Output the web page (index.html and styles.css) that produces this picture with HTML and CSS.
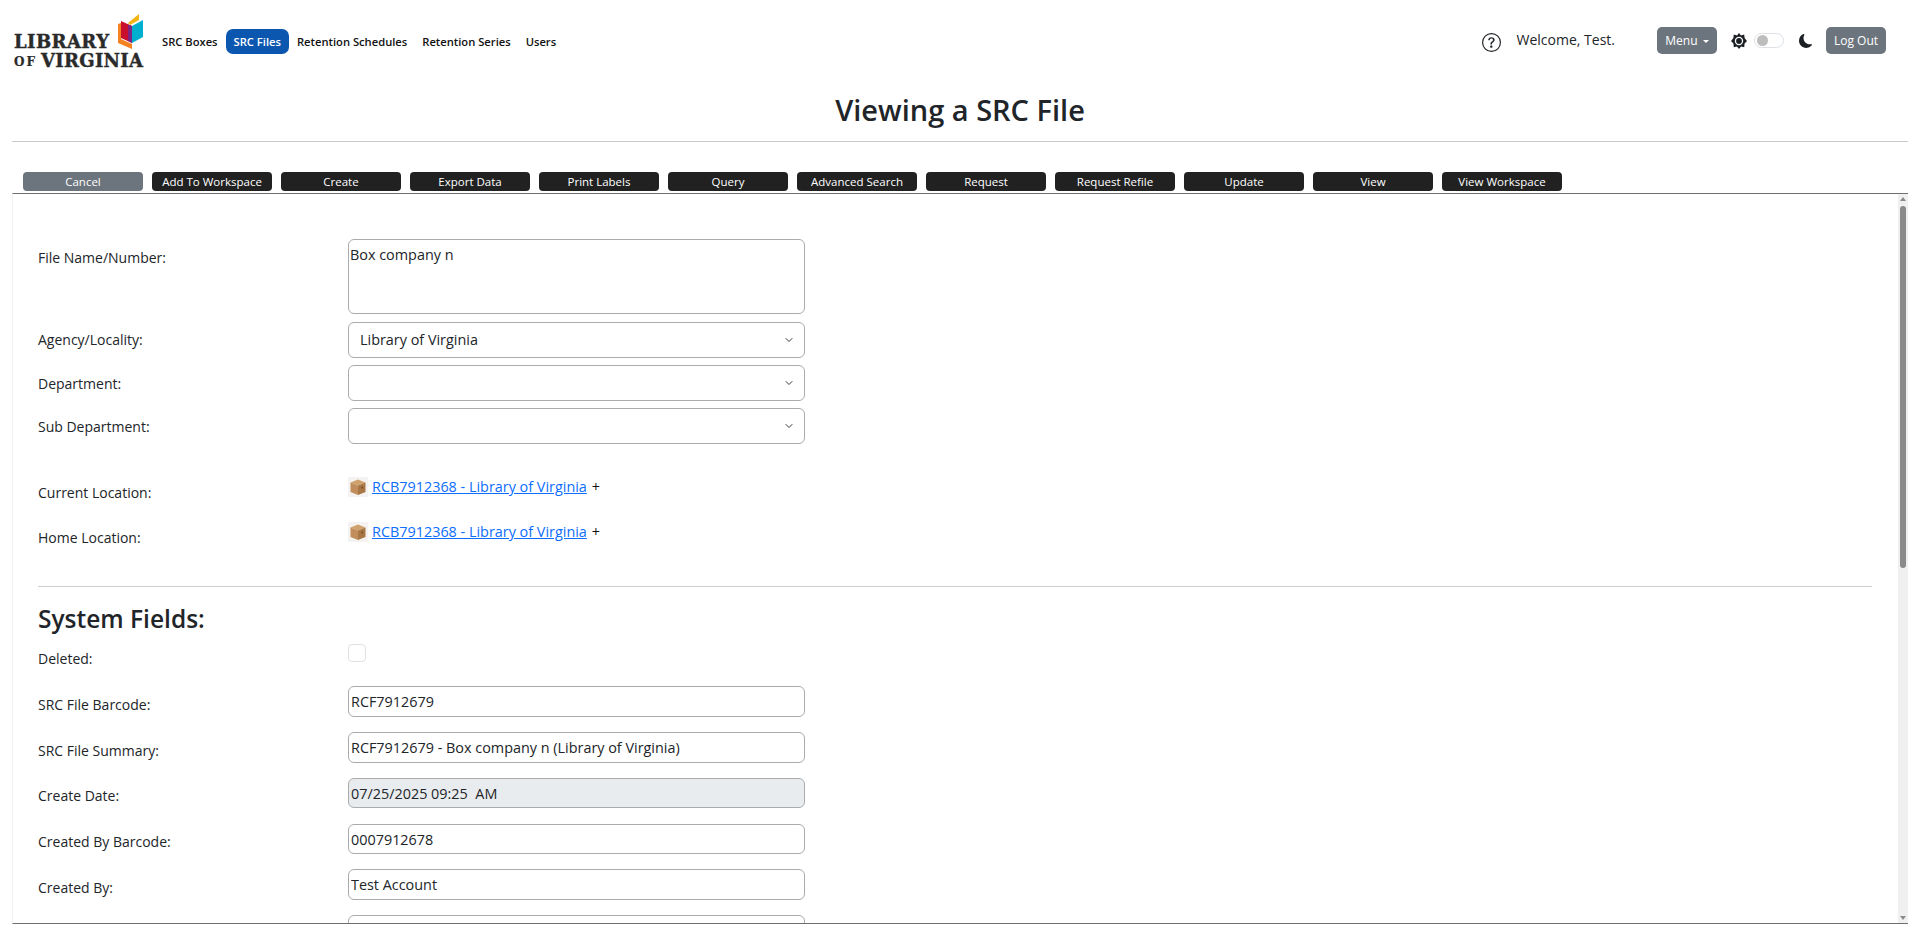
FILE: index.html
```html
<!DOCTYPE html>
<html lang="en">
<head>
<meta charset="utf-8">
<title>Viewing a SRC File</title>
<link rel="stylesheet" href="styles.css">
</head>
<body>
<header class="top">
  <a class="logo" href="#">
    <svg width="135" height="56" viewBox="12 14 135 56">
      <text class="logo-big" x="14" y="48" textLength="95">LIBRARY</text>
      <text class="logo-small" x="14" y="66" textLength="21">OF</text>
      <text class="logo-big" x="41" y="67" textLength="102">VIRGINIA</text>
      <polygon fill="#f58220" points="118,24 121,23 121,39 132,44 132,49 118,43"/>
      <polygon fill="#c8102e" points="121,21 132,26 132,43 121,38"/>
      <polygon fill="#7b2482" points="128,24.5 132,26 132,43 128,41"/>
      <polygon fill="#f2b411" points="128,23 139,14 139,20 130,25"/>
      <polygon fill="#00afd0" points="132,26 143,20 143,37 132,43"/>
    </svg>
  </a>
  <nav class="nav">
    <a href="#">SRC Boxes</a>
    <a href="#" class="active">SRC Files</a>
    <a href="#">Retention Schedules</a>
    <a href="#">Retention Series</a>
    <a href="#">Users</a>
  </nav>
  <div class="tools">
    <svg class="help" width="19" height="19" viewBox="0 0 16 16" fill="#212529">
      <path d="M8 15A7 7 0 1 1 8 1a7 7 0 0 1 0 14m0 1A8 8 0 1 0 8 0a8 8 0 0 0 0 16"/>
      <path d="M5.255 5.786a.237.237 0 0 0 .241.247h.825c.138 0 .248-.113.266-.25.09-.656.54-1.134 1.342-1.134.686 0 1.314.343 1.314 1.168 0 .635-.374.927-.965 1.371-.673.489-1.206 1.06-1.168 1.987l.003.217a.25.25 0 0 0 .25.246h.811a.25.25 0 0 0 .25-.25v-.105c0-.718.273-.927 1.01-1.486.609-.463 1.244-.977 1.244-2.056 0-1.511-1.276-2.241-2.673-2.241-1.267 0-2.655.59-2.75 2.286m1.557 5.763c0 .533.425.927 1.01.927.609 0 1.028-.394 1.028-.927 0-.552-.42-.94-1.029-.94-.584 0-1.009.388-1.009.94"/>
    </svg>
    <span class="welcome">Welcome, Test.</span>
    <button class="pill menu" type="button">Menu <i class="caret"></i></button>
    <svg class="sun" width="16" height="16" viewBox="0 0 16 16">
      <polygon fill="#1c1f23" points="8,0 10,2.6 13.2,1.6 13.6,5 16,8 13.6,10.4 13.2,14.2 10,13.4 8,16 6,13.4 2.8,14.2 2.4,10.4 0,8 2.4,5 2.8,1.6 6,2.6"/>
      <circle cx="8" cy="8" r="4.2" fill="#fff"/>
      <circle cx="8" cy="8" r="2.9" fill="#1c1f23"/>
    </svg>
    <span class="switch"><i></i></span>
    <svg class="moon" width="13" height="16" viewBox="0 0 15 16" fill="#1c1f23">
      <path d="M6 .278a.77.77 0 0 1 .08.858 7.2 7.2 0 0 0-.878 3.46c0 4.021 3.278 7.277 7.318 7.277q.792-.001 1.533-.16a.79.79 0 0 1 .81.316.73.73 0 0 1-.031.893A8.35 8.35 0 0 1 8.344 16C3.734 16 0 12.286 0 7.71 0 4.266 2.114 1.312 5.124.06A.75.75 0 0 1 6 .278"/>
    </svg>
    <button class="pill logout" type="button">Log Out</button>
  </div>
</header>

<div class="title-wrap"><h1>Viewing a SRC File</h1></div>

<div class="toolbar">
  <button class="tb cancel" type="button">Cancel</button>
  <button class="tb" type="button">Add To Workspace</button>
  <button class="tb" type="button">Create</button>
  <button class="tb" type="button">Export Data</button>
  <button class="tb" type="button">Print Labels</button>
  <button class="tb" type="button">Query</button>
  <button class="tb" type="button">Advanced Search</button>
  <button class="tb" type="button">Request</button>
  <button class="tb" type="button">Request Refile</button>
  <button class="tb" type="button">Update</button>
  <button class="tb" type="button">View</button>
  <button class="tb" type="button">View Workspace</button>
</div>

<main class="frame">
  <div class="scroller">
    <form class="form">
      <div class="row r-area">
        <label class="lab lab-7">File Name/Number:</label>
        <textarea class="field area">Box company n</textarea>
      </div>
      <div class="row r-sel first-sel">
        <label class="lab">Agency/Locality:</label>
        <span class="sel">
          <select class="field select"><option>Library of Virginia</option></select>
          <svg class="chev" width="8" height="8" viewBox="0 0 16 16"><path d="m2 5 6 6 6-6" fill="none" stroke="#343a40" stroke-width="2" stroke-linecap="round" stroke-linejoin="round"/></svg>
        </span>
      </div>
      <div class="row r-sel">
        <label class="lab lab-2">Department:</label>
        <span class="sel">
          <select class="field select"><option></option></select>
          <svg class="chev" width="8" height="8" viewBox="0 0 16 16"><path d="m2 5 6 6 6-6" fill="none" stroke="#343a40" stroke-width="2" stroke-linecap="round" stroke-linejoin="round"/></svg>
        </span>
      </div>
      <div class="row r-sel">
        <label class="lab lab-2">Sub Department:</label>
        <span class="sel">
          <select class="field select"><option></option></select>
          <svg class="chev" width="8" height="8" viewBox="0 0 16 16"><path d="m2 5 6 6 6-6" fill="none" stroke="#343a40" stroke-width="2" stroke-linecap="round" stroke-linejoin="round"/></svg>
        </span>
      </div>

      <div class="row r-loc first-loc">
        <label class="lab lab-4">Current Location:</label>
        <div class="loc">
          <svg class="box" width="20" height="20" viewBox="0 0 20 20">
            <rect width="20" height="20" fill="#f4f3f1"/>
            <polygon fill="#d0a26e" points="10,2.5 17.5,5.5 10,8.5 2.5,5.5"/>
            <polygon fill="#c08d5b" points="2.5,5.5 10,8.5 10,18 2.5,15"/>
            <polygon fill="#a97745" points="17.5,5.5 10,8.5 10,18 17.5,15"/>
            <rect x="13.5" y="9.5" width="1.5" height="2" fill="#6f4a28"/>
          </svg>
          <a href="#">RCB7912368 - Library of Virginia</a><span class="plus">+</span>
        </div>
      </div>
      <div class="row r-loc second-loc">
        <label class="lab lab-4">Home Location:</label>
        <div class="loc">
          <svg class="box" width="20" height="20" viewBox="0 0 20 20">
            <rect width="20" height="20" fill="#f4f3f1"/>
            <polygon fill="#d0a26e" points="10,2.5 17.5,5.5 10,8.5 2.5,5.5"/>
            <polygon fill="#c08d5b" points="2.5,5.5 10,8.5 10,18 2.5,15"/>
            <polygon fill="#a97745" points="17.5,5.5 10,8.5 10,18 17.5,15"/>
            <rect x="13.5" y="9.5" width="1.5" height="2" fill="#6f4a28"/>
          </svg>
          <a href="#">RCB7912368 - Library of Virginia</a><span class="plus">+</span>
        </div>
      </div>

      <hr class="rule">
      <h2>System Fields:</h2>

      <div class="row r-check">
        <label class="lab lab-3">Deleted:</label>
        <input class="check" type="checkbox" disabled>
      </div>
      <div class="row r-in h31">
        <label class="lab lab-7">SRC File Barcode:</label>
        <input class="field" type="text" value="RCF7912679">
      </div>
      <div class="row r-in h31">
        <label class="lab lab-7">SRC File Summary:</label>
        <input class="field" type="text" value="RCF7912679 - Box company n (Library of Virginia)">
      </div>
      <div class="row r-in h30">
        <label class="lab lab-6">Create Date:</label>
        <input class="field ro" type="text" value="07/25/2025 09:25  AM" readonly>
      </div>
      <div class="row r-in h30 mt16">
        <label class="lab lab-6">Created By Barcode:</label>
        <input class="field" type="text" value="0007912678">
      </div>
      <div class="row r-in h31">
        <label class="lab lab-7">Created By:</label>
        <input class="field" type="text" value="Test Account">
      </div>
      <div class="row r-in h31">
        <label class="lab lab-7"></label>
        <input class="field" type="text" value="">
      </div>
    </form>
  </div>
  <div class="bar" aria-hidden="true">
    <i class="arrow up"></i>
    <i class="thumb"></i>
    <i class="arrow down"></i>
  </div>
</main>
</body>
</html>
```
FILE: styles.css
```css
* { box-sizing: border-box; }
html, body { height: 100%; }
body {
  margin: 0;
  height: 929px;
  overflow: hidden;
  background: #fff;
  color: #212529;
  font-family: "Open Sans", "Noto Sans", sans-serif;
  font-size: 14px;
  line-height: 24px;
}
a { color: inherit; }

.top { display: flex; align-items: flex-start; height: 82px; padding: 14px 34px 0 12px; }
.logo { display: block; width: 135px; height: 56px; flex: none; }
.logo svg { display: block; }
.logo-big { font-family: "DejaVu Serif", serif; font-weight: 700; font-size: 18px; fill: #2a2a2a; stroke: #2a2a2a; stroke-width: .4; }
.logo-small { font-family: "DejaVu Serif", serif; font-weight: 700; font-size: 12px; fill: #2a2a2a; stroke: #2a2a2a; stroke-width: .2; }

.nav { display: flex; align-items: center; margin: 15px 0 0 8px; gap: 1px; font-size: 11.2px; font-weight: 600; color: #111; }
.nav a { text-decoration: none; height: 25px; line-height: 25px; padding: 0 7px; border-radius: 7px; white-space: nowrap; }
.nav a.active { background: #0b57b0; color: #fff; padding: 0 8px; }

.tools { margin-left: auto; display: flex; align-items: center; height: 27px; margin-top: 13px; }
.help { margin-right: 16px; margin-top: 4px; }
.welcome { font-size: 14px; margin-right: 42px; margin-top: -1px; }
.pill { border: 0; background: #6c757d; color: #fff; height: 27px; width: 60px; border-radius: 5px; font: 12px "Open Sans", sans-serif; padding: 0; }
.caret { display: inline-block; border: 3px solid transparent; border-top-color: #fff; border-bottom: 0; margin-left: 2px; vertical-align: 2px; }
.sun { margin-left: 14px; }
.switch { display: block; width: 30px; height: 15px; margin-left: 7px; border: 1px solid #dee2e6; border-radius: 8px; padding: 1px 0 0 2px; margin-top: -1px; }
.switch i { display: block; width: 11px; height: 11px; border-radius: 50%; background: #bdbdbd; }
.moon { margin-left: 15px; }
.logout { margin-left: 14px; }

.title-wrap { height: 60px; margin: 0 12px; border-bottom: 1px solid #c9c9c9; padding-top: 10px; }
h1 { margin: 0; text-align: center; font-size: 29px; line-height: 36px; font-weight: 600; }

.toolbar { display: flex; gap: 9px; padding: 30px 0 0 23px; height: 51px; margin-top: 0; }
.tb { width: 120px; height: 19px; border: 0; border-radius: 4px; background: #212121; color: #fff; font: 11.5px/19px "Open Sans", sans-serif; padding: 0; }
.tb.cancel { background: #6c757d; }

.frame { display: flex; height: 731px; margin: 0 12px; border-top: 1px solid #6f6f6f; border-bottom: 1px solid #6f6f6f; border-left: 1px solid #f1f1f1; }
.scroller { flex: 1; overflow: hidden; }
.form { padding: 45px 26px 0 25px; }

.row { display: flex; align-items: flex-start; }
.lab { display: block; width: 310px; flex: none; font-size: 14px; line-height: 24px; height: 24px; }
.lab-7 { margin-top: 7px; }
.lab-6 { margin-top: 6px; }
.lab-4 { margin-top: 4px; }
.lab-3 { margin-top: 3px; }
.lab-2 { margin-top: 2px; }

.field { display: block; width: 457px; height: 31px; border: 1px solid #ababab; border-radius: 6px; background: #fff; color: #212529; font: 14.4px/24px "Open Sans", sans-serif; padding: 2px; margin: 0; outline: 0; }
.area { height: 75px; resize: none; padding: 3px 2px 0 1px; overflow: hidden; }
.r-sel { align-items: center; margin-top: 7px; }
.first-sel { margin-top: 8px; }
.sel { display: block; position: relative; }
.select { height: 36px; padding: 0 11px; appearance: none; }
.chev { position: absolute; right: 12px; top: 14px; }

.r-loc { height: 28px; }
.first-loc { margin-top: 33px; }
.second-loc { margin-top: 17px; }
.loc { display: flex; align-items: center; height: 20px; white-space: pre; font-size: 14.4px; }
.loc a { color: #0d6efd; margin-left: 4px; }
.box { flex: none; }
.plus { color: #111; margin-left: 5px; }

.rule { height: 1px; border: 0; background: #cfcfcf; margin: 36px 0 0; }
h2 { margin: 17px 0 0; font-size: 24.5px; line-height: 29px; font-weight: 600; }

.r-check { margin-top: 11px; height: 27px; }
.check { appearance: none; display: block; width: 18px; height: 18px; margin: 0; border: 1px solid #dee2e6; border-radius: 4px; background: #fff; }
.r-in { margin-top: 15px; }
.mt16 { margin-top: 16px; }
.h30 .field { height: 30px; }
.h31 .field { height: 31px; }
.ro { background: #e9ecef; }

.bar { flex: none; width: 10px; background: #f0f0f0; display: flex; flex-direction: column; align-items: center; }
.bar i { display: block; }
.arrow { width: 0; height: 0; border-left: 3px solid transparent; border-right: 3px solid transparent; }
.arrow.up { border-bottom: 4px solid #8a8a8a; margin-top: 3px; }
.arrow.down { border-top: 4px solid #8a8a8a; margin-top: auto; margin-bottom: 3px; }
.thumb { width: 6px; height: 362px; border-radius: 3px; background: #8a8a8a; margin-top: 5px; }
```
